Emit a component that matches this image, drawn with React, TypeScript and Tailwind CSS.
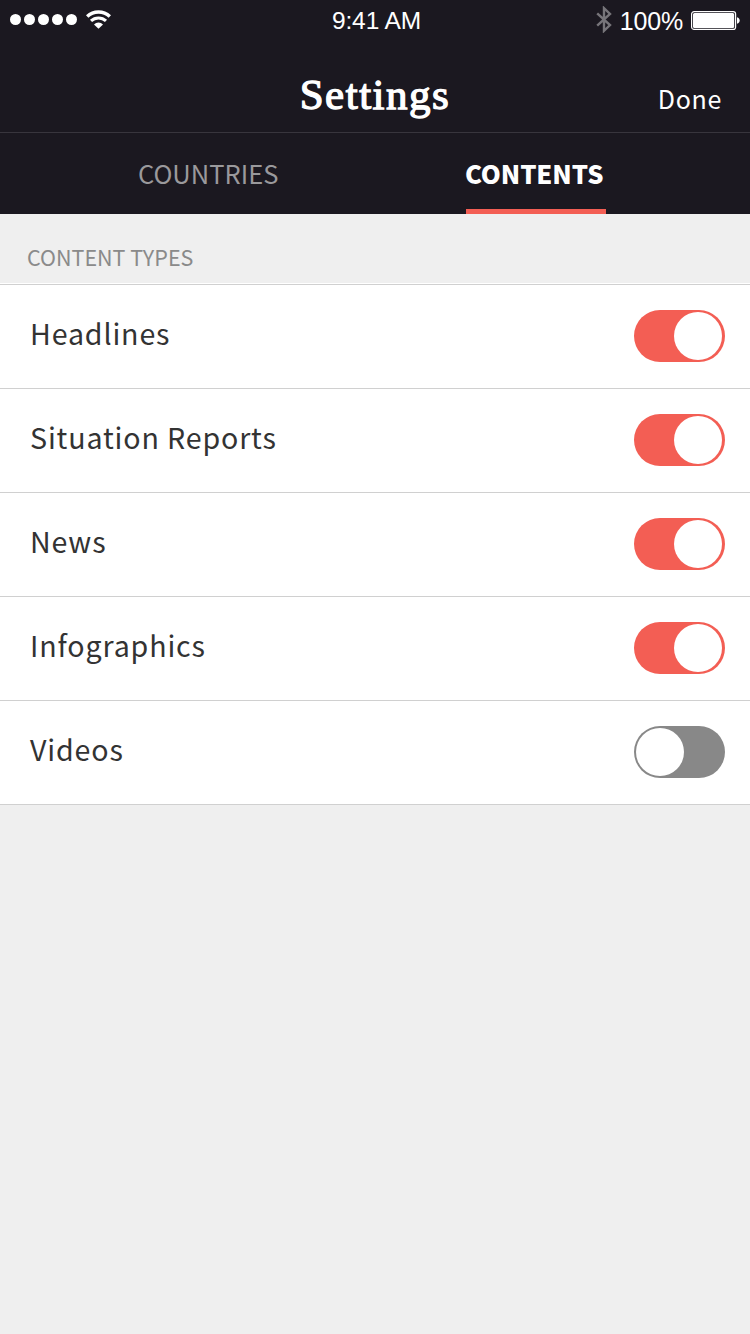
import { useState } from 'react';

const sans = "font-['Noto_Sans_CJK_SC','Noto_Sans',sans-serif]";

const initialItems = [
  { label: 'Headlines', on: true },
  { label: 'Situation Reports', on: true },
  { label: 'News', on: true },
  { label: 'Infographics', on: true },
  { label: 'Videos', on: false },
];

function Toggle({ on, label, onToggle }: { on: boolean; label: string; onToggle: () => void }) {
  return (
    <button
      type="button"
      role="switch"
      aria-checked={on}
      aria-label={label}
      onClick={onToggle}
      className={`flex h-[52px] w-[91px] items-center rounded-full ${
        on ? 'justify-end bg-[#f35e54] pr-[3px]' : 'justify-start bg-[#888888] pl-[2px]'
      }`}
    >
      <span className="size-12 rounded-full bg-white" />
    </button>
  );
}

function StatusBar() {
  return (
    <div className="grid h-10 grid-cols-3 items-center font-['Liberation_Sans',sans-serif] text-white">
      <div className="flex items-center pb-[2px] pl-[10px]">
        <div className="flex gap-[3px]">
          {[0, 1, 2, 3, 4].map((dot) => (
            <span key={dot} className="size-[11px] rounded-full bg-white" />
          ))}
        </div>
        <svg className="mb-px ml-[9px] h-[19px] w-[25px]" viewBox="0 0 25 19" fill="none" stroke="white">
          <path d="M1.2 6.4a16.4 16.4 0 0 1 22.6 0" strokeWidth="3.5" />
          <path d="M5 10.9a11 11 0 0 1 15 0" strokeWidth="3.1" />
          <path d="M12.5 18.8 8 14.4a6.2 6.2 0 0 1 9 0z" fill="white" stroke="none" />
        </svg>
      </div>
      <div className="pt-px pl-[3px] text-center text-[24.5px] leading-10 tracking-[-0.1px]">9:41 AM</div>
      <div className="flex items-center justify-end pr-[10px]">
        <svg className="mb-[2px] h-[27px] w-[16px]" viewBox="0 0 16 27" fill="none" stroke="#77757a" strokeWidth="2.4">
          <path d="M1.2 7.3 14 19 8 24.8V2.2L14 8 1.2 19.7" />
        </svg>
        <span className="ml-[8px] pt-px text-[25px] leading-10 tracking-[-0.2px]">100%</span>
        <svg className="mb-px ml-[8px] h-[19px] w-[49px]" viewBox="0 0 49 19">
          <rect x="0.6" y="0.6" width="44" height="17.8" rx="2.5" fill="none" stroke="white" strokeWidth="1.2" />
          <rect x="2" y="2" width="41.2" height="15" rx="1.5" fill="white" />
          <path d="M46 6.2c3.6.8 3.6 5.8 0 6.6z" fill="white" />
        </svg>
      </div>
    </div>
  );
}

export default function App() {
  const [items, setItems] = useState(initialItems);
  const toggle = (index: number) =>
    setItems((prev) => prev.map((item, i) => (i === index ? { ...item, on: !item.on } : item)));

  return (
    <div className={`flex h-[1334px] w-[750px] flex-col overflow-hidden bg-[#efefef] ${sans}`}>
      <header className="h-[214px] bg-[#1b1820] text-white">
        <StatusBar />
        <div className="grid h-[93px] grid-cols-[1fr_auto_1fr] border-b border-[#38353d]">
          <span />
          <h1 className="pt-[31px] font-['Liberation_Serif',serif] text-[43px] leading-[48px] font-normal tracking-[1.5px] [-webkit-text-stroke:1.3px_white]">
            Settings
          </h1>
          <button type="button" className="flex justify-end pt-[38px] pr-[28px] text-[25px] leading-10 tracking-[0.7px]">
            Done
          </button>
        </div>
        <nav className="flex h-[81px] pl-[138px]">
          <button type="button" className="flex w-[327px] pt-[20px] text-[25.5px] leading-10 tracking-[0px] text-[#9a999c]">
            COUNTRIES
          </button>
          <button
            type="button"
            className="flex w-[141px] pt-[20px] text-[25.5px] leading-10 font-black tracking-[-0.1px] whitespace-nowrap bg-[linear-gradient(#f35e54,#f35e54)] bg-[length:140px_5px] bg-right-bottom bg-no-repeat"
          >
            CONTENTS
          </button>
        </nav>
      </header>
      <h2 className="h-[69px] pt-[23px] pl-[27px] text-[21.5px] leading-10 text-[#8a8a8a]">CONTENT TYPES</h2>
      <ul className="border-b border-[#d0d0d0] bg-white pt-px">
        {items.map((item, index) => (
          <li
            key={item.label}
            className="flex h-[104px] items-center justify-between border-t border-[#d0d0d0] pr-[25px] pb-[2px] pl-[30px]"
          >
            <span className="pb-[6px] text-[28.6px] leading-10 tracking-[0.85px] text-[#333333]">{item.label}</span>
            <Toggle on={item.on} label={item.label} onToggle={() => toggle(index)} />
          </li>
        ))}
      </ul>
    </div>
  );
}
